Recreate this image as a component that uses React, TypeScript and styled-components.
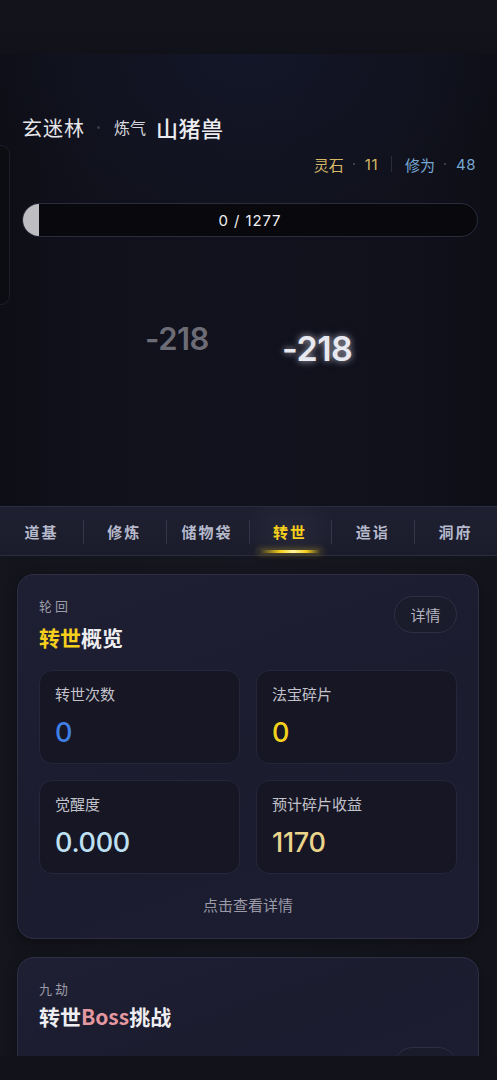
import React from "react";
import styled, { createGlobalStyle } from "styled-components";

const Global = createGlobalStyle`
  html, body { margin: 0; padding: 0; background: #12121a; }
  body { font-family: "Noto Sans CJK SC", "Noto Sans", sans-serif; }
  * { box-sizing: border-box; }
`;

const Page = styled.div`
  width: 497px;
  height: 1080px;
  display: flex;
  flex-direction: column;
  overflow: hidden;
  background: #12121a;
`;

const TopBar = styled.div`
  height: 54px;
  flex: none;
  background: linear-gradient(180deg, #14141d 0%, #111119 100%);
`;

const Battle = styled.div`
  position: relative;
  height: 452px;
  flex: none;
  padding: 58px 21px 0 22px;
  display: flex;
  flex-direction: column;
  background:
    radial-gradient(ellipse 55% 40% at 50% 0%, rgba(22, 26, 50, 0.55) 0%, rgba(20, 22, 40, 0) 100%),
    linear-gradient(90deg, #0d0e16 0%, #10111b 20%, #11121d 50%, #10111b 80%, #0d0e16 100%);
`;

const SidePanel = styled.div`
  position: absolute;
  left: -100px;
  top: 91px;
  width: 110px;
  height: 160px;
  border-radius: 9px;
  background: #0c0c13;
  border: 1px solid #1f1f2b;
`;

const TitleRow = styled.div`
  height: 30px;
  display: flex;
  align-items: center;
  color: #e6e6ea;
`;

const Place = styled.span`
  font-size: 20px;
  letter-spacing: 1px;
`;

const Dot = styled.span`
  width: 3px;
  height: 3px;
  border-radius: 50%;
  background: #3a3b48;
  margin: 0 14px 0 12px;
`;

const Realm = styled.span`
  font-size: 16px;
  margin-right: 10px;
  color: #d8d8de;
`;

const Monster = styled.span`
  font-size: 22px;
  font-weight: 500;
  color: #ececf0;
  letter-spacing: 0.5px;
`;

const StatsRow = styled.div`
  margin-top: 12px;
  height: 20px;
  display: flex;
  justify-content: flex-end;
  align-items: center;
  font-size: 15px;
`;

const Stat = styled.span<{ $c: string }>`
  color: ${(p) => p.$c};
  display: flex;
  align-items: center;
`;

const Num = styled.span`
  font-family: "Inter", "Noto Sans", sans-serif;
  font-size: 15px;
  letter-spacing: 0.5px;
`;

const SmallDot = styled.span`
  width: 2px;
  height: 2px;
  border-radius: 50%;
  background: #4a4b58;
  margin: 0 10px 0 9px;
`;

const VSep = styled.span`
  width: 1px;
  height: 16px;
  background: #2c2d3a;
  margin: 0 13px;
`;

const Bar = styled.div`
  margin-top: 29px;
  height: 34px;
  margin-right: -2px;
  border-radius: 17px;
  background: #08080d;
  border: 1px solid #2a2b3c;
  position: relative;
  overflow: hidden;
  display: flex;
  align-items: center;
  justify-content: center;
`;

const BarFill = styled.div`
  position: absolute;
  left: 0;
  top: 0;
  bottom: 0;
  background: #bdbdc2;
`;

const BarText = styled.span`
  position: relative;
  color: #f0f0f2;
  font-family: "Inter", "Noto Sans", sans-serif;
  font-size: 15px;
  letter-spacing: 0.9px;
`;

const Damage = styled.span<{ $x: number; $y: number; $size: number; $c: string; $glow?: boolean }>`
  position: absolute;
  left: ${(p) => p.$x}px;
  top: ${(p) => p.$y}px;
  font-family: "Inter", "Noto Sans", sans-serif;
  font-weight: 600;
  font-size: ${(p) => p.$size}px;
  color: ${(p) => p.$c};
  letter-spacing: -0.5px;
  line-height: 1;
  text-shadow: ${(p) => (p.$glow ? "0 0 6px rgba(255,255,255,0.55), 0 0 12px rgba(200,200,255,0.25)" : "none")};
`;

const Tabs = styled.div`
  height: 50px;
  flex: none;
  display: grid;
  grid-template-columns: repeat(6, 1fr);
  align-items: center;
  background: linear-gradient(180deg, #1e1f30 0%, #1b1c2b 100%);
  border-top: 1px solid #2b2c40;
  border-bottom: 1px solid #2b2c3e;
`;

const Tab = styled.div<{ $active?: boolean; $first?: boolean }>`
  position: relative;
  height: 100%;
  display: flex;
  align-items: center;
  justify-content: center;
  font-size: 15px;
  font-weight: 700;
  letter-spacing: 2px;
  color: ${(p) => (p.$active ? "#f5cf1c" : "#b6b9cc")};
  background: ${(p) =>
    p.$active ? "radial-gradient(ellipse 60% 70% at 50% 50%, rgba(60,60,80,0.35) 0%, rgba(0,0,0,0) 100%)" : "none"};
  &::before {
    content: "";
    display: ${(p) => (p.$first ? "none" : "block")};
    position: absolute;
    left: 0;
    top: 13px;
    height: 24px;
    width: 1px;
    background: #35364a;
  }
  &::after {
    content: "";
    display: ${(p) => (p.$active ? "block" : "none")};
    position: absolute;
    left: 9px;
    right: 9px;
    bottom: 2px;
    height: 3px;
    border-radius: 2px;
    background: linear-gradient(90deg, rgba(245,207,28,0) 0%, #f5cf1c 35%, #fff2a0 55%, #f5cf1c 75%, rgba(245,207,28,0) 100%);
    box-shadow: 0 0 6px rgba(245, 207, 28, 0.6);
  }
`;

const Scroll = styled.div`
  height: 500px;
  flex: none;
  overflow: hidden;
  padding: 18px 18px 0 17px;
  display: flex;
  flex-direction: column;
  gap: 18px;
  background: linear-gradient(90deg, #15151d 0%, #14141c 4%, #161620 50%, #14141c 96%, #13131a 100%);
`;

const Card = styled.div`
  flex: none;
  border-radius: 17px;
  border: 1px solid #2e2f47;
  background: linear-gradient(160deg, #1e1f33 0%, #1b1c2e 50%, #1c1d30 100%);
  padding: 21px 21px 0 21px;
  box-shadow: 0 4px 12px rgba(0, 0, 0, 0.35);
`;

const CardHead = styled.div`
  display: flex;
  justify-content: space-between;
  align-items: flex-start;
`;

const Kicker = styled.div`
  font-size: 13px;
  color: #9c9ca8;
  letter-spacing: 3px;
  line-height: 20px;
`;

const CardTitle = styled.div<{ $gap: number }>`
  margin-top: ${(p) => p.$gap}px;
  font-size: 21px;
  font-weight: 700;
  color: #eeeef2;
  line-height: 28px;
`;

const Hl = styled.span<{ $c: string }>`
  color: ${(p) => p.$c};
`;

const Pill = styled.div`
  width: 63px;
  height: 37px;
  border-radius: 19px;
  border: 1px solid #2e2f44;
  background: #1a1b2b;
  color: #b4b4be;
  font-size: 15px;
  display: flex;
  align-items: center;
  justify-content: center;
`;

const Grid = styled.div`
  margin-top: 19px;
  display: grid;
  grid-template-columns: 1fr 1fr;
  gap: 16px;
`;

const Box = styled.div`
  height: 94px;
  border-radius: 13px;
  border: 1px solid #25263a;
  background: #161624;
  padding: 11px 15px 0 15px;
`;

const BoxLabel = styled.div`
  font-size: 15px;
  color: #c2c2ca;
  line-height: 24px;
`;

const BoxValue = styled.div<{ $c: string }>`
  margin-top: 11px;
  font-size: 27px;
  font-family: "Inter", "Noto Sans", sans-serif;
  font-weight: 500;
  line-height: 32px;
  letter-spacing: -0.3px;
  color: ${(p) => p.$c};
`;

const Footer = styled.div`
  height: 64px;
  display: flex;
  align-items: center;
  justify-content: center;
  font-size: 15px;
  color: #9a9aa8;
  padding-bottom: 3px;
`;

const Card2Pill = styled(Pill)`
  margin-top: 68px;
`;

const BottomBar = styled.div`
  flex: 1;
  background: #12121a;
`;

export default function App() {
  return (
    <Page>
      <Global />
      <TopBar />
      <Battle>
        <SidePanel />
        <TitleRow>
          <Place>玄迷林</Place>
          <Dot />
          <Realm>炼气</Realm>
          <Monster>山猪兽</Monster>
        </TitleRow>
        <StatsRow>
          <Stat $c="#d6b865">
            灵石
            <SmallDot />
            <Num>11</Num>
          </Stat>
          <VSep />
          <Stat $c="#78a8d2">
            修为
            <SmallDot />
            <Num>48</Num>
          </Stat>
        </StatsRow>
        <Bar>
          <BarFill style={{ width: "16px" }} />
          <BarText>0 / 1277</BarText>
        </Bar>
        <Damage $x={145} $y={269} $size={31} $c="#6c6c76">-218</Damage>
        <Damage $x={282} $y={278} $size={34} $c="#e8e8f0" $glow>-218</Damage>
      </Battle>
      <Tabs>
        <Tab $first>道基</Tab>
        <Tab>修炼</Tab>
        <Tab>储物袋</Tab>
        <Tab $active>转世</Tab>
        <Tab>造诣</Tab>
        <Tab>洞府</Tab>
      </Tabs>
      <Scroll>
        <Card>
          <CardHead>
            <div>
              <Kicker>轮回</Kicker>
              <CardTitle $gap={7}>
                <Hl $c="#f5cf1c">转世</Hl>概览
              </CardTitle>
            </div>
            <Pill>详情</Pill>
          </CardHead>
          <Grid>
            <Box>
              <BoxLabel>转世次数</BoxLabel>
              <BoxValue $c="#3f7fe6">0</BoxValue>
            </Box>
            <Box>
              <BoxLabel>法宝碎片</BoxLabel>
              <BoxValue $c="#f2d21c">0</BoxValue>
            </Box>
            <Box>
              <BoxLabel>觉醒度</BoxLabel>
              <BoxValue $c="#bfe0f2">0.000</BoxValue>
            </Box>
            <Box>
              <BoxLabel>预计碎片收益</BoxLabel>
              <BoxValue $c="#ebd48c">1170</BoxValue>
            </Box>
          </Grid>
          <Footer>点击查看详情</Footer>
        </Card>
        <Card>
          <CardHead>
            <div>
              <Kicker>九劫</Kicker>
              <CardTitle $gap={3}>
                转世<Hl $c="#e3979f">Boss</Hl>挑战
              </CardTitle>
            </div>
            <Card2Pill />
          </CardHead>
        </Card>
      </Scroll>
      <BottomBar />
    </Page>
  );
}
